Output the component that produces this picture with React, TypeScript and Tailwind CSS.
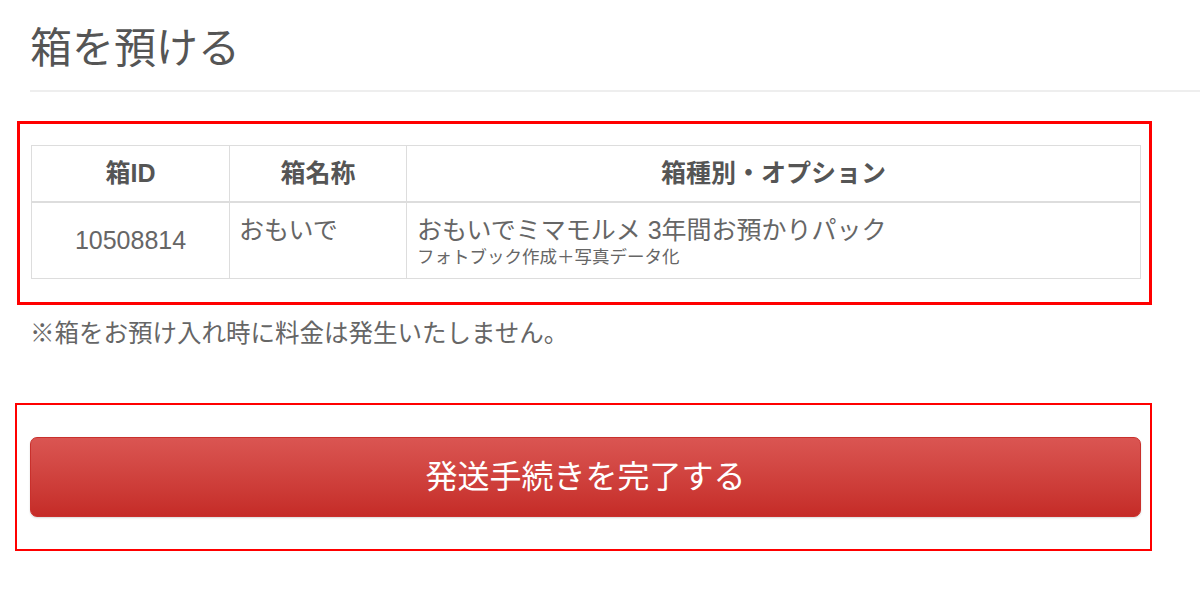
import React from 'react'

const font = { fontFamily: '"Liberation Sans", "Noto Sans CJK JP", sans-serif' }

export default function App() {
  return (
    <div className="w-[1200px] h-[605px] bg-white overflow-hidden" style={font}>
      <h1 className="ml-[30px] pt-[28px] text-[42px] leading-[42px] font-normal text-[#555]">箱を預ける</h1>
      <div className="ml-[30px] mt-[20px] h-[2px] bg-[#eee]" />

      <div className="ml-[17px] mt-[29px] w-[1135px] border-[3px] border-[#f00] pt-[21px] pb-[23px] pl-[11px] pr-[8px]">
        <table className="w-[1110px] border-collapse table-fixed text-[#666]">
          <colgroup>
            <col className="w-[198px]" />
            <col className="w-[177px]" />
            <col />
          </colgroup>
          <thead>
            <tr className="text-[#555] text-[25px] font-bold">
              <th className="h-[56px] border border-b-2 border-[#ddd] text-center align-middle">箱ID</th>
              <th className="border border-b-2 border-[#ddd] text-center align-middle">箱名称</th>
              <th className="border border-b-2 border-[#ddd] text-center align-middle">箱種別・オプション</th>
            </tr>
          </thead>
          <tbody>
            <tr className="text-[25px]">
              <td className="h-[77px] border border-[#ddd] text-center align-middle">10508814</td>
              <td className="border border-[#ddd] align-top pl-[9px] pt-[10px] leading-[34px]">おもいで</td>
              <td className="border border-[#ddd] align-top pl-[10px] pt-[10px]">
                <div className="leading-[34px]">おもいでミマモルメ 3年間お預かりパック</div>
                <div className="text-[17.5px] leading-[22px] -mt-[1px]">フォトブック作成＋写真データ化</div>
              </td>
            </tr>
          </tbody>
        </table>
      </div>

      <p className="ml-[30px] mt-[12px] text-[24.5px] leading-[34px] text-[#666]">※箱をお預け入れ時に料金は発生いたしません。</p>

      <div className="ml-[15px] mt-[52px] w-[1137px] border-2 border-[#f00] pt-[32px] pb-[32px] pl-[13px] pr-[9px]">
        <button
          type="button"
          className="w-[1111px] h-[80px] rounded-[7px] border border-[#c9302c] bg-gradient-to-b from-[#da5552] to-[#c52b27] text-white text-[32px] leading-none shadow-[0_1px_2px_rgba(0,0,0,0.15)]"
        >
          発送手続きを完了する
        </button>
      </div>
    </div>
  )
}
